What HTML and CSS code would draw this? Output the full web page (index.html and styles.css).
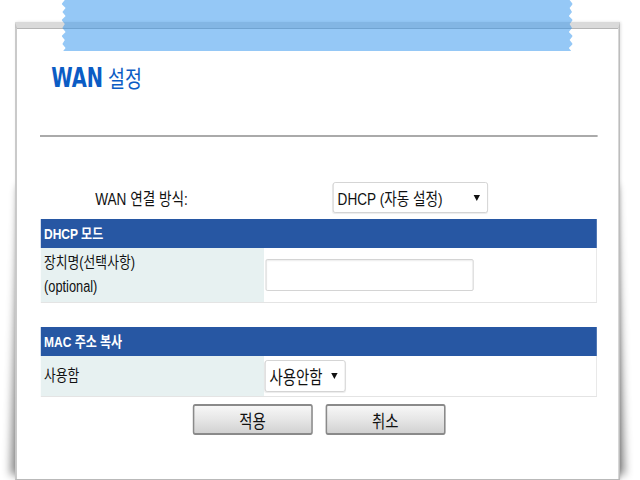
FILE: index.html
```html
<!DOCTYPE html>
<html lang="ko">
<head>
  <meta charset="UTF-8">
  <meta name="viewport" content="width=device-width, initial-scale=1.0">
  <title>WAN 설정</title>
  <link rel="stylesheet" href="styles.css">
</head>
<body>

  <div class="stage">
    <div class="tape"></div>

    <div class="paper">
      <h1 class="title"><b>WAN</b> 설정</h1>
      <div class="rule"></div>

      <div class="mode-row">
        <span class="mode-label">WAN 연결 방식:</span>
        <div class="select select-wide"><span>DHCP (자동 설정)</span><i class="caret"></i></div>
      </div>

      <div class="section section-dhcp">
        <div class="section-head">DHCP 모드</div>
        <div class="field field-tall">
          <div class="field-label">장치명(선택사항)<br>(optional)</div>
          <div class="field-value"><input class="text-input" type="text"></div>
        </div>
      </div>

      <div class="section section-mac">
        <div class="section-head">MAC 주소 복사</div>
        <div class="field">
          <div class="field-label">사용함</div>
          <div class="field-value">
            <div class="select select-small"><span>사용안함</span><i class="caret"></i></div>
          </div>
        </div>
      </div>

      <div class="actions">
        <button class="btn">적용</button>
        <button class="btn">취소</button>
      </div>
    </div>
  </div>

</body>
</html>
```

FILE: styles.css
```css
* {
  box-sizing: border-box;
}

html, body {
  margin: 0;
  width: 640px;
  height: 480px;
  overflow: hidden;
  background: #fff;
}

body {
  font-family: "Liberation Sans", "Noto Sans CJK KR", sans-serif;
  font-size: 16px;
  color: #111;
}

/* the old page was 800px wide, shown squeezed into 640 */
.stage {
  position: relative;
  width: 800px;
  height: 480px;
  padding-top: 22px;
  overflow: hidden;
  transform: scaleX(0.8);
  transform-origin: 0 0;
}

.tape {
  position: absolute;
  top: 0;
  left: 77px;
  width: 639px;
  height: 51px;
  z-index: 2;
  background: rgba(43, 145, 238, 0.5);
  clip-path: polygon(4px 0, 0 4px, 5px 8px, 1px 12px, 5px 16px, 0 20px, 4px 24px, 1px 28px, 5px 32px, 0 36px, 4px 40px, 1px 44px, 5px 48px, 2px 51px,
    637px 51px, 634px 48px, 639px 44px, 635px 40px, 639px 36px, 634px 32px, 638px 28px, 635px 24px, 639px 20px, 634px 16px, 638px 12px, 635px 8px, 639px 4px, 635px 0);
}

.paper {
  position: relative;
  width: 756px;
  height: 458px;
  margin-left: 19px;
  padding: 0 27px 0 30px;
  background: #fff;
  border: 2px solid #bdbdbd;
  border-top: 6px solid #dadada;
  border-bottom: 1px solid #b9b9b9;
  box-shadow: inset 0 1px 0 #b5b5b5, 1px 0 3px rgba(0, 0, 0, 0.12);
}

/* curled shadow along both sides */
.paper::before, .paper::after {
  content: "";
  position: absolute;
  top: 35%;
  bottom: 4px;
  width: 30px;
  z-index: -1;
  transform-origin: top;
}

.paper::before {
  left: 10px;
  box-shadow: -8px 0 9px rgba(0, 0, 0, 0.45);
  transform: skewX(-2deg);
}

.paper::after {
  right: 10px;
  box-shadow: 8px 0 9px rgba(0, 0, 0, 0.45);
  transform: skewX(2deg);
}

.title {
  margin: 35px 0 0;
  padding-left: 13px;
  height: 30px;
  line-height: 30px;
  font-size: 23px;
  font-weight: normal;
  color: #0b5cc4;
}

.title b {
  font-family: "Liberation Sans Narrow", "DejaVu Sans Condensed", "Liberation Sans", sans-serif;
  font-stretch: condensed;
  font-size: 27px;
}

.rule {
  margin: 42px -1px 0;
  border-top: 2px solid #aaa;
}

.mode-row {
  display: flex;
  align-items: center;
  height: 31px;
  margin-top: 45px;
}

.mode-label {
  width: 365px;
  padding-left: 68px;
  font-size: 17px;
}

.select {
  display: flex;
  align-items: center;
  justify-content: space-between;
  height: 31px;
  padding: 0 9px 0 5px;
  background: #fff;
  border: 1px solid #d0d0d0;
  border-radius: 3px;
  box-shadow: 0 1px 1px rgba(0, 0, 0, 0.08);
  font-size: 17px;
}

.select-wide {
  width: 194px;
}

.select-small {
  width: 101px;
  height: 32px;
  margin-left: -1px;
  font-size: 18px;
}

.caret {
  width: 0;
  height: 0;
  border-left: 4px solid transparent;
  border-right: 4px solid transparent;
  border-top: 6px solid #111;
}

.section-dhcp {
  margin-top: 6px;
}

.section-mac {
  margin-top: 24px;
}

.section-head {
  height: 29px;
  line-height: 29px;
  padding-left: 4px;
  background: #2757a3;
  color: #fff;
  font-size: 15px;
  font-weight: bold;
}

.field {
  display: flex;
  height: 41px;
  border-right: 1px solid #e4e4e4;
  border-bottom: 1px solid #e4e4e4;
}

.field-tall {
  height: 55px;
}

.field-label {
  display: flex;
  align-items: center;
  width: 279px;
  padding-left: 4px;
  line-height: 24px;
  background: #e7f1f1;
}

.field-value {
  flex: 1;
  display: flex;
  align-items: center;
  padding-left: 2px;
}

.text-input {
  width: 260px;
  height: 32px;
  border: 1px solid #cfcfcf;
  border-radius: 2px;
  box-shadow: inset 0 1px 2px rgba(0, 0, 0, 0.08);
}

.actions {
  display: flex;
  justify-content: center;
  gap: 16px;
  margin-top: 7px;
}

.btn {
  width: 150px;
  height: 31px;
  padding: 0;
  font-family: inherit;
  font-size: 18px;
  color: #111;
  background: linear-gradient(#f7f7f7, #e6e6e6 50%, #d2d2d2);
  border: 2px solid #8a8a8a;
  border-radius: 3px;
}
```
